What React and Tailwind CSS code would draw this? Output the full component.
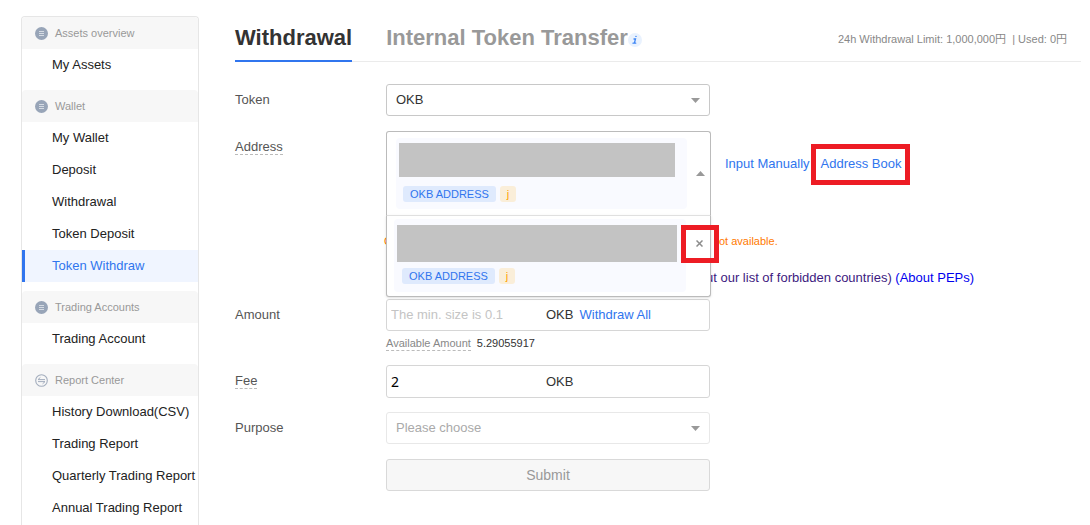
import React from "react";

const menu = [
  { title: "Assets overview", icon: "list", items: ["My Assets"] },
  {
    title: "Wallet",
    icon: "list",
    items: ["My Wallet", "Deposit", "Withdrawal", "Token Deposit", "Token Withdraw"],
  },
  { title: "Trading Accounts", icon: "list", items: ["Trading Account"] },
  {
    title: "Report Center",
    icon: "swap",
    items: ["History Download(CSV)", "Trading Report", "Quarterly Trading Report", "Annual Trading Report"],
  },
];

function GroupIcon({ kind }) {
  if (kind === "swap") {
    return (
      <svg className="size-[13px] shrink-0" viewBox="0 0 13 13" fill="none" stroke="#a3adbd" aria-hidden="true">
        <circle cx="6.5" cy="6.5" r="5.8" strokeWidth="1.1" />
        <path d="M3 5.6H10M5.4 3.4L3 5.6M3 7.6H10L7.6 9.8" strokeWidth="1" />
      </svg>
    );
  }
  return (
    <svg className="size-[13px] shrink-0" viewBox="0 0 13 13" aria-hidden="true">
      <circle cx="6.5" cy="6.5" r="6.5" fill="#98a5b8" />
      <path d="M4 4.5H9M4 6.5H9M4 8.5H9" stroke="#d5dbe3" strokeWidth="1" />
    </svg>
  );
}

function Sidebar() {
  return (
    <nav className="flex w-[178px] shrink-0 flex-col gap-[9px] rounded-t border border-b-0 border-[#e6e6e6]">
      {menu.map((group) => (
        <section key={group.title}>
          <h2 className="flex h-8 items-center gap-[7px] rounded-t bg-[#f7f7f7] pl-[13px] text-[11px] text-[#999]">
            <GroupIcon kind={group.icon} />
            {group.title}
          </h2>
          <ul>
            {group.items.map((item) => (
              <li key={item}>
                <a
                  href="#"
                  className={
                    item === "Token Withdraw"
                      ? "flex h-8 items-center whitespace-nowrap border-l-[3px] border-[#3075ee] bg-[#f0f5ff] pl-[27px] text-[#3075ee]"
                      : "flex h-8 items-center whitespace-nowrap pl-[30px] text-[#222]"
                  }
                >
                  {item}
                </a>
              </li>
            ))}
          </ul>
        </section>
      ))}
    </nav>
  );
}

function Caret({ up }) {
  return (
    <svg className="h-[5px] w-[9px]" viewBox="0 0 9 5" fill="#999" aria-hidden="true">
      <path d={up ? "M0 5L4.5 0L9 5Z" : "M0 0H9L4.5 5Z"} />
    </svg>
  );
}

function Label({ htmlFor, dashed, children }) {
  return (
    <div className="w-[151px] shrink-0 pt-2 leading-[15px] text-[#555]">
      <label
        htmlFor={htmlFor}
        className={dashed ? "inline-block border-b border-dashed border-[#bbb]" : "inline-block"}
      >
        {children}
      </label>
    </div>
  );
}

function Tags() {
  return (
    <span className="flex gap-1 text-[11px] leading-4">
      <span className="rounded-[3px] bg-[#dfeafd] px-[7px] text-[#3075ee]">OKB ADDRESS</span>
      <span className="rounded-[3px] bg-[#faeed9] px-[7px] text-[#ffa200]">j</span>
    </span>
  );
}

function Select({ id, text, className }) {
  return (
    <div className="relative w-[324px]">
      <select
        id={id}
        className={"block h-8 w-full appearance-none rounded-[3px] border bg-white px-[9px] " + className}
      >
        <option>{text}</option>
      </select>
      <span className="pointer-events-none absolute inset-y-0 right-[10px] flex items-center">
        <Caret />
      </span>
    </div>
  );
}

function AddressPicker() {
  return (
    <div className="relative z-10 w-[325px]">
      <button
        id="address"
        type="button"
        aria-expanded="true"
        aria-label="OKB ADDRESS j"
        className="flex h-[84px] w-full items-center justify-between rounded-t-[3px] border border-b-0 border-[#bbb] bg-white pl-[9px] pr-[5px]"
      >
        <span className="flex h-[71px] w-[291px] flex-col gap-[9px] rounded bg-[#f9faff] pl-[3px] pt-[5px]">
          <span className="h-[34px] w-[276px] bg-[#c3c3c3]" />
          <span className="pl-1">
            <Tags />
          </span>
        </span>
        <Caret up />
      </button>
      <div className="absolute inset-x-0 top-full flex h-[82px] items-start rounded-b-[3px] border border-[#bbb] border-t-[#e0e0e0] bg-white pl-[7px] pt-[3px] shadow-sm">
        <div className="flex h-[73px] w-[292px] flex-col gap-[6px] rounded bg-[#f9faff] pl-[3px] pt-[6px]">
          <div className="h-[37px] w-[280px] bg-[#c3c3c3]" />
          <div className="pl-[5px]">
            <Tags />
          </div>
        </div>
        <button
          type="button"
          aria-label="Remove address"
          className="relative ml-[5px] mt-4 flex size-4 items-center justify-center"
        >
          <svg className="size-[7px]" viewBox="0 0 7 7" stroke="#8c8c8c" strokeWidth="1.5" aria-hidden="true">
            <path d="M0.5 0.5L6.5 6.5M6.5 0.5L0.5 6.5" />
          </svg>
          <span className="absolute -bottom-3 -left-[10px] -right-3 -top-[10px] border-[5px] border-[#ed1c24]" />
        </button>
      </div>
    </div>
  );
}

export default function App() {
  return (
    <div className="flex min-h-screen bg-white pl-[21px] pr-[9px] pt-4 font-['Liberation_Sans','Noto_Sans_CJK_JP',sans-serif] text-[13px] text-[#222]">
      <Sidebar />
      <main className="ml-9 min-w-0 flex-1">
        <header className="flex items-start justify-between border-b border-[#ebebeb]">
          <div className="-mb-px flex gap-[34px] text-[22px] font-bold leading-[44px]">
            <a href="#" className="border-b-2 border-[#3075ee] text-[#333]">
              Withdrawal
            </a>
            <a href="#" className="flex items-start text-[#999]">
              Internal Token Transfer
              <svg className="mt-[17px] size-[14px]" viewBox="0 0 14 14" aria-hidden="true">
                <circle cx="7" cy="7" r="7" fill="#e9f2fe" />
                <path
                  d="M7.9 3.4H8.1M6 6H7.5L6.4 10.2H7.7M5 10.2H6.4"
                  fill="none"
                  stroke="#3d85f5"
                  strokeWidth="1.3"
                  strokeLinecap="round"
                />
              </svg>
            </a>
          </div>
          <p className="whitespace-pre pr-[14px] pt-[15px] text-[11px] leading-4 text-[#888]">
            {"24h Withdrawal Limit: 1,000,000円  | Used: 0円"}
          </p>
        </header>

        <form className="pt-[22px]">
          <div className="flex">
            <Label htmlFor="token">Token</Label>
            <Select id="token" text="OKB" className="border-[#c8c8c8] text-[#333]" />
          </div>

          <div className="mt-[15px] flex">
            <Label htmlFor="address" dashed>
              Address
            </Label>
            <div>
              <div className="flex items-start">
                <AddressPicker />
                <div className="flex gap-[11px] whitespace-nowrap pl-[14px] pt-[23px] leading-5 text-[#3075ee]">
                  <a href="#">Input Manually</a>
                  <a href="#" className="relative">
                    Address Book
                    <span className="absolute -bottom-[11px] -left-[10px] -right-2 -top-[10px] border-[5px] border-[#ed1c24]" />
                  </a>
                </div>
              </div>
              <p className="-ml-[2px] mt-[18px] flex whitespace-nowrap text-[11px] leading-4 text-[#ff7a00]">
                <span className="w-[335px]">C</span>
                <span>ot available.</span>
              </p>
              <p className="mt-[19px] whitespace-nowrap pl-[320px] leading-5">
                <a href="#" className="text-[#3d1a80]">
                  ut our list of forbidden countries)
                </a>{" "}
                <a href="#" className="text-[#0000ee]">
                  (About PEPs)
                </a>
              </p>
            </div>
          </div>

          <div className="mt-[11px] flex">
            <Label htmlFor="amount">Amount</Label>
            <div>
              <div className="flex h-8 w-[324px] items-center rounded-[3px] border border-[#d6d6d6] pl-1 text-[#333]">
                <input
                  id="amount"
                  placeholder="The min. size is 0.1"
                  className="w-[155px] outline-none placeholder:text-[#c4c4c4]"
                />
                <span>OKB</span>
                <button type="button" className="ml-[6px] text-[#3075ee]">
                  Withdraw All
                </button>
              </div>
              <p className="mt-[5px] flex gap-[6px] text-[11px] leading-[14px] text-[#333]">
                <span className="border-b border-dashed border-[#bbb] text-[#888]">Available Amount</span>
                <span>5.29055917</span>
              </p>
            </div>
          </div>

          <div className="mt-[14px] flex">
            <Label htmlFor="fee" dashed>
              Fee
            </Label>
            <div className="flex h-[33px] w-[324px] items-center rounded-[3px] border border-[#d6d6d6] pl-1 text-[#333]">
              <input
                id="fee"
                defaultValue="2"
                className="w-[155px] font-['Noto_Sans',sans-serif] text-sm text-black outline-none"
              />
              <span>OKB</span>
            </div>
          </div>

          <div className="mt-[14px] flex">
            <Label htmlFor="purpose">Purpose</Label>
            <Select id="purpose" text="Please choose" className="border-[#e8e8e8] text-[#aaa]" />
          </div>

          <button
            type="submit"
            className="ml-[151px] mt-[15px] block h-8 w-[324px] rounded-[3px] border border-[#d9d9d9] bg-[#f7f7f7] text-sm text-[#999]"
          >
            Submit
          </button>
        </form>
      </main>
    </div>
  );
}
